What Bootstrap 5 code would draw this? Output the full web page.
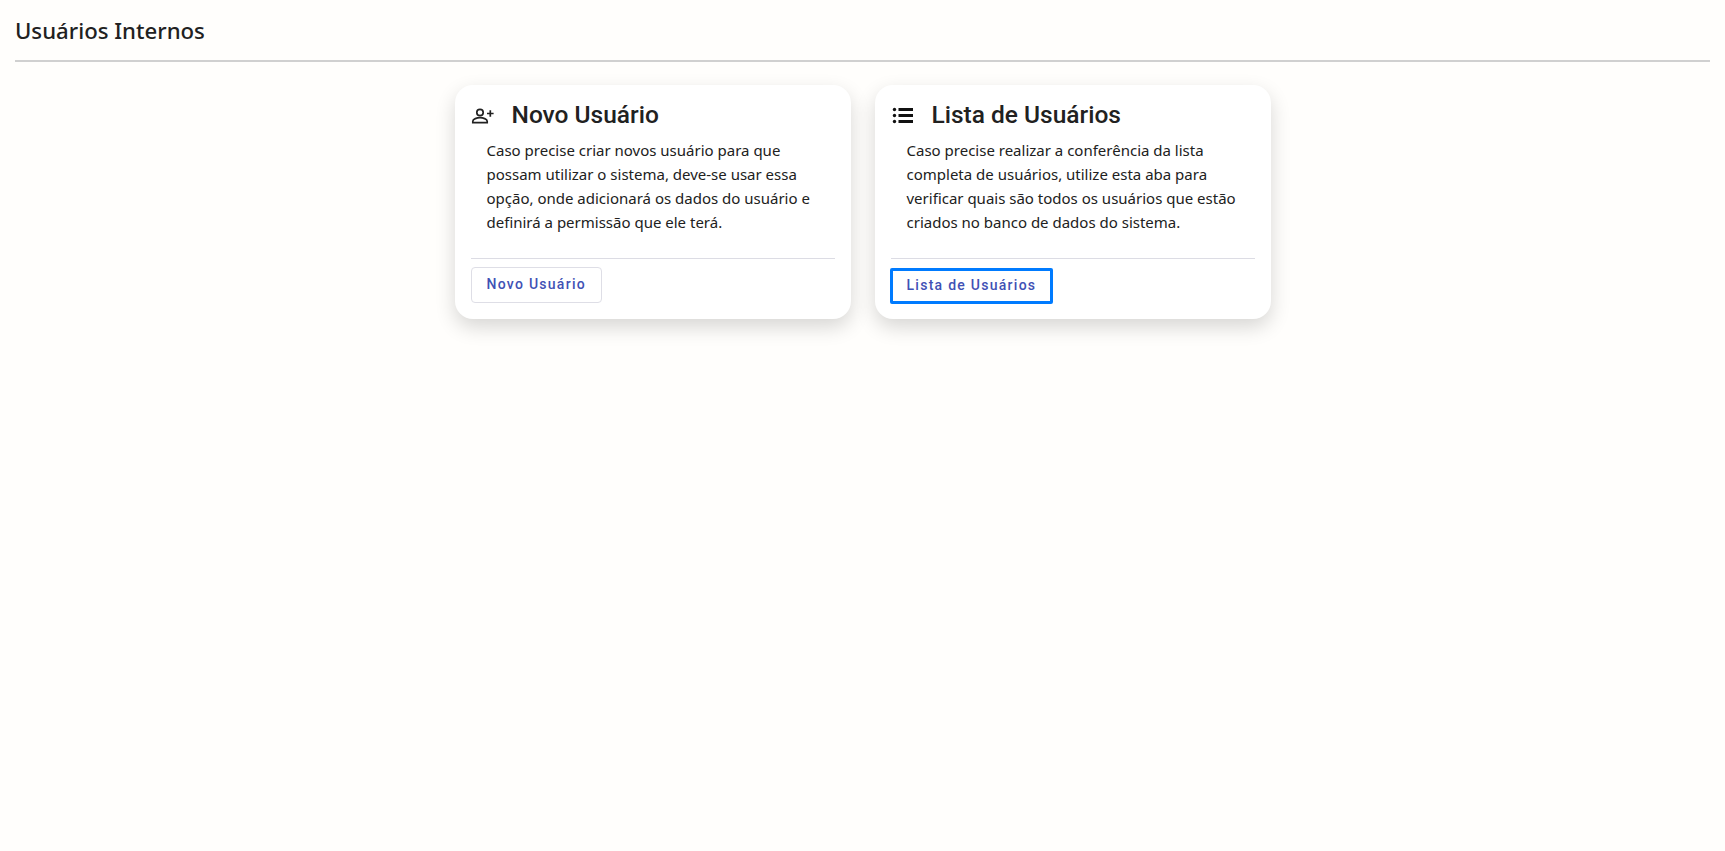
<!DOCTYPE html>
<html lang="pt-BR">
    <head>
        <meta charset="utf-8">
        <title>Usuários Internos</title>
        <link href="https://cdn.jsdelivr.net/npm/bootstrap@5.3.1/dist/css/bootstrap.min.css" rel="stylesheet" />
        <script src="https://cdn.jsdelivr.net/npm/bootstrap@5.3.1/dist/js/bootstrap.bundle.min.js"></script>
        <style>
            body { background: #fffefc; font-family: "Noto Sans", sans-serif; color: #212121; min-height: 100vh; }
            .page-head { padding: 14px 15px 0; }
            .page-title { font-size: 22.2px; font-weight: 500; line-height: 34px; margin: 0; padding-bottom: 12px; border-bottom: 2px solid #d0d0d0; }
            .cards-row { gap: 24px; margin-top: 23px; padding-bottom: 40px; }
            .user-card { width: 396px; border: 0; border-radius: 18px; background: #fff; box-shadow: 0 8px 20px rgba(0,0,0,.16); padding: 14px 16px 16px; }
            .card-top { gap: 17px; }
            .user-card h2 { font-family: Roboto, sans-serif; font-size: 24.5px; font-weight: 500; margin: 0; line-height: 32px; }
            .user-card p { font-size: 15px; line-height: 24px; margin: 7px 0 0 16px; }
            .user-card hr { margin: 24px 0 8px; border-color: #dcdce4; opacity: 1; }
            .card-action { display: block; font-family: Roboto, sans-serif; font-size: 14px; font-weight: 500; letter-spacing: 1.27px; color: #3f51b5; background: #fff; border: 1px solid #dedee6; border-radius: 4px; padding: 6px 15px 8px; line-height: 20px; }
            .card-action.is-focused { border: 3px solid #007bff; border-radius: 2px; padding: 4px 14px 6px; margin: 1px 0 -1px -1px; }
        </style>
    </head>
    <body>
        <div class="page-head">
            <h1 class="page-title">Usuários Internos</h1>
        </div>
        <div class="d-flex justify-content-center cards-row">
            <div class="card user-card">
                <div class="d-flex align-items-center card-top">
                    <svg width="24" height="24" viewBox="0 0 24 24" fill="none" stroke="#212121" stroke-width="1.7"><circle cx="9" cy="9.500" r="3.2"/><path d="M1.800 19.700v-1.500c0-2.200 4.300-3.500 7.200-3.500s7.200 1.300 7.200 3.500v1.500z"/><path d="M19.300 7.200v6.600M16 10.500h6.600"/></svg>
                    <h2>Novo Usuário</h2>
                </div>
                <p>Caso precise criar novos usuário para que possam utilizar o sistema, deve-se usar essa opção, onde adicionará os dados do usuário e definirá a permissão que ele terá.</p>
                <hr>
                <div><button type="button" class="card-action">Novo Usuário</button></div>
            </div>
            <div class="card user-card">
                <div class="d-flex align-items-center card-top">
                    <svg width="24" height="24" viewBox="0 0 24 24" fill="#111"><circle cx="3.500" cy="6.500" r="1.700"/><circle cx="3.500" cy="12.500" r="1.700"/><circle cx="3.500" cy="18.500" r="1.700"/><path d="M7.500 5H22v3H7.500zM7.500 11H22v3H7.500zM7.500 17H22v3H7.500z"/></svg>
                    <h2>Lista de Usuários</h2>
                </div>
                <p>Caso precise realizar a conferência da lista completa de usuários, utilize esta aba para verificar quais são todos os usuários que estão criados no banco de dados do sistema.</p>
                <hr>
                <div><button type="button" class="card-action is-focused">Lista de Usuários</button></div>
            </div>
        </div>
    </body>
</html>
